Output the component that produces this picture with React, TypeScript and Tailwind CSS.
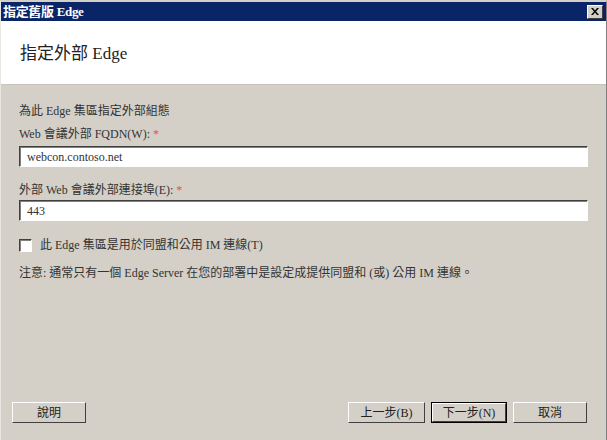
import React from 'react';

const font = { fontFamily: '"Liberation Serif", "Noto Sans CJK TC", serif' };

const Button: React.FC<{ label: string; focused?: boolean; className?: string }> = ({ label, focused, className = '' }) => (
  <button
    className={`h-[21px] text-[12px] text-[#222] bg-[#d4d0c8] border ${
      focused ? 'border-black' : 'border-t-white border-l-white border-r-[#404040] border-b-[#404040]'
    } ${className}`}
  >
    <span className={`flex h-full w-full items-center justify-center ${focused ? 'border border-t-white border-l-white border-r-[#404040] border-b-[#404040]' : ''}`}>
      {label}
    </span>
  </button>
);

const Field: React.FC<{ value: string }> = ({ value }) => (
  <div className="h-[21px] w-[569px] bg-white border border-t-[#404040] border-l-[#404040] border-r-white border-b-white shadow-[inset_1px_1px_0_#808080] flex items-center px-[7px] text-[12px] text-[#333]">
    {value}
  </div>
);

export default function App() {
  return (
    <div style={font} className="w-[607px] h-[440px] bg-[#d4d0c8] flex flex-col border-l border-r border-t-2 border-l-[#e8e6e0] border-r-[#808080] border-t-[#d4d0c8] overflow-hidden">
      {/* Title bar */}
      <div className="h-[19px] bg-[#0a2468] flex items-center justify-between pl-[2px] pr-[3px]">
        <span className="text-white text-[13px] font-bold leading-none tracking-tight">指定舊版 Edge</span>
        <div className="w-[16px] h-[14px] bg-[#d4d0c8] border border-t-white border-l-white border-r-[#404040] border-b-[#404040] flex items-center justify-center">
          <svg width="8" height="7" viewBox="0 0 8 7">
            <path d="M0 0h2l2 2.5L6 0h2L5 3.5 8 7H6L4 4.5 2 7H0l3-3.5z" fill="#000" />
          </svg>
        </div>
      </div>

      {/* Header */}
      <div className="h-[64px] bg-white flex items-center pl-[19px] border-b border-[#c8c4bc]">
        <span className="text-[17px] text-[#222] mt-[3px]">指定外部 Edge</span>
      </div>

      {/* Body */}
      <div className="flex-1 flex flex-col px-[18px] pt-[17px] text-[12px] text-[#333]">
        <div className="leading-[18px]">為此 Edge 集區指定外部組態</div>
        <div className="mt-[5px] leading-[18px]">
          Web 會議外部 FQDN(W): <span className="text-[#e05050]">*</span>
        </div>
        <div className="mt-[3px]">
          <Field value="webcon.contoso.net" />
        </div>
        <div className="mt-[14px] leading-[18px]">
          外部 Web 會議外部連接埠(E): <span className="text-[#e05050]">*</span>
        </div>
        <div className="mt-[1px]">
          <Field value="443" />
        </div>
        <label className="mt-[15px] flex items-center gap-[8px] leading-[18px]">
          <span className="w-[13px] h-[13px] bg-white border border-t-[#404040] border-l-[#404040] border-r-white border-b-white shadow-[inset_1px_1px_0_#808080]" />
          <span>此 Edge 集區是用於同盟和公用 IM 連線(T)</span>
        </label>
        <div className="mt-[10px] leading-[18px]">
          注意: 通常只有一個 Edge Server 在您的部署中是設定成提供同盟和 (或) 公用 IM 連線。
        </div>

        <div className="mt-auto mb-[17px] flex items-center">
          <Button label="說明" className="w-[74px] -ml-[7px]" />
          <div className="ml-auto flex gap-[6px] mr-[1px]">
            <Button label="上一步(B)" className="w-[77px]" />
            <Button label="下一步(N)" focused className="w-[76px]" />
            <Button label="取消" className="w-[74px]" />
          </div>
        </div>
      </div>
    </div>
  );
}
